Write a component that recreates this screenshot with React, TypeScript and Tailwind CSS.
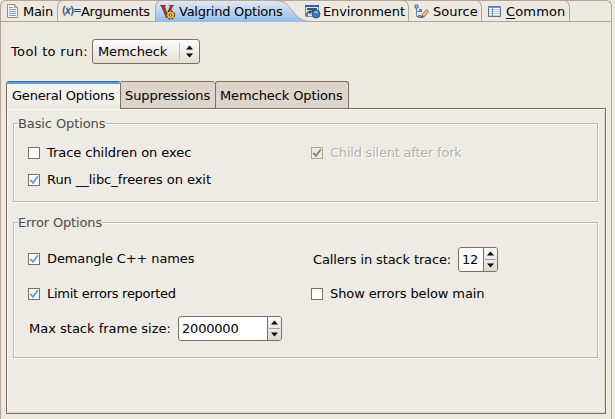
import type { ReactNode } from "react";

const Check = ({
  label,
  checked,
  disabled,
  className = "",
}: {
  label: string;
  checked?: boolean;
  disabled?: boolean;
  className?: string;
}) => (
  <label className={`flex h-4 items-center gap-[7px] ${className}`}>
    <span
      className={`relative block size-3 shrink-0 border ${
        disabled ? "border-[#b0a393] bg-[#eeebe4]" : "border-[#7d7060] bg-white"
      }`}
    >
      {checked && (
        <svg className="block size-[10px]" viewBox="0 0 10 10" fill="none">
          <path d="M1.2 4.8 4 7.8 8.9 1.3" stroke={disabled ? "#8c7f70" : "#5b9fe6"} strokeWidth="1.9" />
        </svg>
      )}
    </span>
    <span className={disabled ? "text-[#b5b1aa] [text-shadow:1px_1px_0_#fff]" : ""}>{label}</span>
  </label>
);

const Group = ({
  title,
  titleClass,
  className,
  children,
}: {
  title: string;
  titleClass: string;
  className: string;
  children: ReactNode;
}) => (
  <section className={`relative border border-[#bbb8b4] shadow-[1px_1px_0_#fff,inset_1px_1px_0_#fff] ${className}`}>
    <h2 className={`absolute -top-2 left-1 h-4 bg-[#eeebe4] leading-4 text-[#4c4b49] ${titleClass}`}>{title}</h2>
    {children}
  </section>
);

const Spinner = ({ value, className }: { value: string; className: string }) => (
  <div className={`flex h-[25px] overflow-hidden rounded-[3px] border border-[#7d7060] bg-white ${className}`}>
    <span className="flex-1 pl-[3px] leading-[23px] tracking-[-0.2px]">{value}</span>
    <svg className="h-[23px] w-[14px] border-l border-[#7d7060] bg-linear-to-b from-[#faf9f7] to-[#ddd7ce]" viewBox="0 0 13 23">
      <path d="M3 7.5h7L6.5 3.5zM3 15.5h7L6.5 19.5z" fill="#000" />
      <path d="M1 11.5h11" stroke="#aaa196" />
    </svg>
  </div>
);

const FileIcon = () => (
  <svg className="h-[15px] w-3" viewBox="0 0 12 15">
    <path d="M.5.5h7l3 3v10H.5z" fill="#f4f6fb" stroke="#a98d4f" />
    <path d="M7.5.5v3h3z" fill="#f2d78a" stroke="#b79c55" />
    <path d="M2 3.5h4M2 5.5h7M2 7.5h7M2 9.5h7M2 11.5h7" stroke="#7e9bd0" />
  </svg>
);

const ValgrindIcon = () => (
  <svg className="h-4 w-[15px]" viewBox="0 0 15 16">
    <path d="M0 1h6v1H5l2 7 3-7H9V1h5v1h-1L8 14H6L1 2H0z" fill="#9c3525" />
    <circle cx="10.5" cy="11" r="3.9" fill="#ffcf43" stroke="#453411" strokeWidth="1.4" strokeDasharray="2 1.06" />
    <circle cx="10.5" cy="11" r="3.2" fill="#f8bd31" />
    <circle cx="10.5" cy="11" r="1.3" fill="#fff" stroke="#614713" />
  </svg>
);

const EnvironmentIcon = () => (
  <svg className="h-[15px] w-4" viewBox="0 0 16 15">
    <path d="M.5 1.5h13v11H.5z" fill="#dce4ee" stroke="#7c8ca5" />
    <path d="M0 1h14v2H0z" fill="#355f9e" />
    <path d="M2 4h10v2H2z" fill="#40566f" />
    <path d="M2 12V9l3-2v2l3-3v2l3-2" fill="none" stroke="#2c4361" strokeWidth="1.3" />
    <circle cx="11" cy="10" r="4" fill="#3e75b7" stroke="#315885" />
    <path d="M8.5 8.5c1.5-2 4-1.5 5 0-1 1-3 1-5 0" fill="#93c0e5" />
  </svg>
);

const SourceIcon = () => (
  <svg className="h-[15px] w-[15px]" viewBox="0 0 15 15" fill="none">
    <path d="M2.5 4v8.5H5M2.5 7.5h3" stroke="#6c82ae" />
    <path d="M1 1h3v3H1zM5.5 5.5h2v2h-2zM4.5 11.5h2v2h-2z" fill="#a9c1e6" stroke="#506c9f" />
    <path d="m7.5 13.5 1-3 4-5 2 1.5-4 5.5z" fill="#f0c98a" stroke="#9d713a" />
    <path d="m7.5 13.5.6-2 1.2 1.2z" stroke="#5b4b38" />
  </svg>
);

const TableIcon = () => (
  <svg className="h-[11px] w-[13px]" viewBox="0 0 13 11">
    <path d="M.5.5h12v10H.5z" fill="#fff" stroke="#587397" />
    <path d="M1 1h11v1H1z" fill="#7898c3" />
    <path d="M1 3.5h11M1 5.5h11M1 7.5h11M1 9.3h11" stroke="#a3b3cc" strokeWidth=".8" />
    <path d="M4.5 2v8" stroke="#7089ae" />
  </svg>
);

export default function App() {
  return (
    <main className="h-[419px] w-[615px] overflow-hidden bg-[#ece9e1] font-['DejaVu_Sans',sans-serif] text-[13px] leading-4 text-black">
      <div className="relative h-[419px] w-[612px] rounded-t-[6px] border-x border-t border-[#b4a594]">
        <nav className="relative -mx-px -mt-px flex h-[22px]">
          <svg className="absolute inset-0 h-[22px] w-[612px]" viewBox="0 0 612 22" fill="none">
            <defs>
              <linearGradient id="selected" x1="0" y1="0" x2="0" y2="1">
                <stop stopColor="#e1e9f1" />
                <stop offset="1" stopColor="#91bde9" />
              </linearGradient>
            </defs>
            <path d="M155 22V6Q156 1 160 1H276C288 1 289 8 295 14C300 19 303 21 310 22z" fill="url(#selected)" />
            <path
              d="M0 21.5H155.5V6Q156 2 160 .5H276C288 1 289 8 295 14C300 19 303 21 310 21.5H612M57.5 21V6Q58 2 62 .5M404 .5Q408 2 408.5 6V21M477 .5Q481 2 481.5 6V21M565 .5Q569 2 569.5 6V21"
              stroke="#b4a594"
            />
          </svg>
          <div className="relative flex w-[57px] items-center pl-[7px] pt-px">
            <FileIcon />
            <span className="ml-1 tracking-[-0.3px]">Main</span>
          </div>
          <div className="relative flex w-[98px] items-center pl-[5px] pt-px">
            <span className="w-4 whitespace-nowrap pb-[2px] text-[10px] tracking-[-0.8px] text-[#24456f] [-webkit-text-stroke:0.3px_#24456f]">
              (<i>x</i>)=
            </span>
            <span className="ml-[3px] tracking-[-0.28px]">Arguments</span>
          </div>
          <div className="relative flex w-[150px] items-center pl-[5px] pt-px">
            <ValgrindIcon />
            <span className="ml-1 whitespace-nowrap tracking-[-0.25px]">Valgrind Options</span>
          </div>
          <div className="relative flex w-[104px] items-center pt-px">
            <EnvironmentIcon />
            <span className="ml-[2px] tracking-[-0.1px]">Environment</span>
          </div>
          <div className="relative flex w-[73px] items-center pl-[5px] pt-px">
            <SourceIcon />
            <span className="ml-1">Source</span>
          </div>
          <div className="relative flex w-[88px] items-center pl-[6px] pt-px">
            <TableIcon />
            <span className="ml-[5px] tracking-[0.15px]">
              <span className="underline underline-offset-2">C</span>ommon
            </span>
          </div>
        </nav>

        <div className="flex h-[59px] items-center pl-[10px]">
          <span className="w-[81px] tracking-[0.35px]">Tool to run:</span>
          <button className="flex h-[25px] w-[108px] items-center rounded-[3px] border border-[#7d7060] bg-linear-to-b from-[#fcfbfa] to-[#e4dfd7] pl-[5px]">
            <span className="w-[81px] text-left tracking-[-0.1px]">Memcheck</span>
            <svg className="h-[17px] w-[18px]" viewBox="0 0 18 17">
              <path d="M.5 0v17" stroke="#c4bcb1" />
              <path d="M7 6.5h7L10.5 2.5zM7 10.5h7L10.5 14.5z" fill="#000" />
            </svg>
          </button>
        </div>

        <div className="ml-[5px] w-[600px]">
          <div className="relative z-10 flex h-7 items-stretch">
            <div className="h-7 w-[115px] overflow-hidden rounded-t-[3px] border-x border-t border-x-[#7d7060] border-t-[#416f9e] bg-linear-to-b from-[#f8f6f3] to-[#eeebe4]">
              <div className="h-[2px] bg-[#599bdd]" />
              <div className="whitespace-nowrap pl-[5px] leading-[23px] tracking-[-0.2px]">General Options</div>
            </div>
            <div className="h-[27px] w-[94px] whitespace-nowrap rounded-tr-[3px] border-t border-[#7d7060] bg-[#ddd5cb] pl-1 leading-[27px] tracking-[-0.08px]">
              Suppressions
            </div>
            <div className="h-[27px] w-[134px] whitespace-nowrap rounded-t-[3px] border-x border-t border-[#7d7060] bg-[#ddd5cb] pl-1 leading-[27px] tracking-[-0.1px]">
              Memcheck Options
            </div>
          </div>
          <div className="-mt-px h-[306px] border border-[#7d7060] bg-[#eeebe4] px-[6px] pt-[14px] shadow-[inset_1px_1px_0_#faf8f4,inset_-1px_-1px_0_#ddd7cd]">
            <Group title="Basic Options" titleClass="tracking-[-0.1px]" className="h-[79px] w-[585px]">
              <div className="grid grid-cols-[283px_1fr] gap-y-[11px] pl-[14px] pt-[21px]">
                <Check label="Trace children on exec" className="tracking-[-0.05px]" />
                <Check label="Child silent after fork" checked disabled className="tracking-[-0.22px]" />
                <Check label="Run __libc_freeres on exit" checked className="tracking-[-0.05px]" />
              </div>
            </Group>
            <Group title="Error Options" titleClass="tracking-[-0.15px]" className="mt-5 h-[136px] w-[585px]">
              <div className="grid grid-cols-[283px_1fr] grid-rows-[25px_44px_25px] items-center pl-[14px] pt-6">
                <Check label="Demangle C++ names" checked className="mb-px tracking-[-0.12px]" />
                <div className="flex items-center pl-[2px]">
                  <span className="w-[145px] whitespace-nowrap tracking-[-0.13px]">Callers in stack trace:</span>
                  <Spinner value="12" className="w-10" />
                </div>
                <Check label="Limit errors reported" checked className="tracking-[-0.28px]" />
                <Check label="Show errors below main" className="tracking-[-0.1px]" />
                <div className="flex items-center pl-px">
                  <span className="w-[149px] whitespace-nowrap">Max stack frame size:</span>
                  <Spinner value="2000000" className="w-[104px]" />
                </div>
              </div>
            </Group>
          </div>
        </div>
      </div>
    </main>
  );
}
